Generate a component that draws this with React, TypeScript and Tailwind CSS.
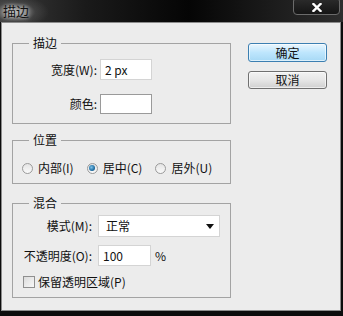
import React from 'react';

const font = { fontFamily: '"Noto Sans CJK SC", "Noto Sans", sans-serif' };

const Group: React.FC<{ title: string; className?: string; children: React.ReactNode }> = ({
  title,
  className,
  children,
}) => (
  <div className={`relative border border-[#a3a3a3] ${className ?? ''}`}>
    <span className="absolute left-[16px] top-[-10px] bg-[#ececec] px-[4px] text-[12px] leading-[18px] text-[#111]">
      {title}
    </span>
    {children}
  </div>
);

const Radio: React.FC<{ checked?: boolean; label: string }> = ({ checked, label }) => (
  <div className="flex items-center gap-[5px]">
    <span className="flex h-[11px] w-[11px] items-center justify-center rounded-full border border-[#9a9a9a] bg-gradient-to-b from-[#e4e4e4] to-[#fafafa]">
      {checked && (
        <span className="h-[6px] w-[6px] rounded-full bg-[radial-gradient(circle_at_40%_40%,#7fc3ea,#1f6ea3_60%,#0f3f60)]" />
      )}
    </span>
    <span className="text-[12px] leading-[16px] text-[#111]">{label}</span>
  </div>
);

export default function App() {
  return (
    <div style={font} className="flex h-[316px] w-[343px] flex-col overflow-hidden bg-[#0c0c0c]">
      {/* title bar */}
      <div className="relative flex h-[22px] items-center bg-[radial-gradient(ellipse_34px_16px_at_15px_12px,rgba(190,190,190,0.85),rgba(90,90,90,0.4)_60%,transparent),linear-gradient(90deg,#3a3a3a_0%,#1a1a1a_25%,#050505_55%,#1c1c1c_80%,#2e2e2e_100%)] pl-[3px]">
        <span className="text-[13px] leading-[16px] text-[#111] [text-shadow:0_0_4px_rgba(255,255,255,0.8)]">
          描边
        </span>
        <div className="absolute right-[3px] top-[-1px] flex h-[16px] w-[47px] items-center justify-center rounded-b-[4px] rounded-t-[2px] border border-[#6b6b6b] bg-gradient-to-b from-[#2a2a2a] to-[#151515]">
          <svg width="10" height="9" viewBox="0 0 10 9">
            <path d="M1.5 1l7 7M8.5 1l-7 7" stroke="#fff" strokeWidth="2.4" strokeLinecap="square" />
          </svg>
        </div>
      </div>

      {/* body */}
      <div className="ml-[1px] flex h-[289px] w-[340px] border border-[#8c8c8c] bg-[#ececec] pl-[10px] pt-[20px]">
        <div className="flex w-[219px] flex-col">
          <Group title="描边" className="h-[81px]">
            <div className="flex flex-col pt-[15px]">
              <div className="flex items-center">
                <span className="w-[84px] text-right text-[12px] leading-[16px] text-[#111]">宽度(W):</span>
                <div className="ml-[3px] flex h-[21px] w-[52px] items-center border border-[#d4d4d4] bg-white pl-[4px] text-[12px] text-[#111]">
                  2 px
                </div>
              </div>
              <div className="mt-[14px] flex items-center">
                <span className="w-[84px] text-right text-[12px] leading-[16px] text-[#111]">颜色:</span>
                <div className="ml-[3px] h-[20px] w-[52px] border border-[#9a9a9a] bg-white" />
              </div>
            </div>
          </Group>

          <Group title="位置" className="mt-[16px] h-[44px]">
            <div className="flex items-center gap-[13px] pl-[9px] pt-[19px]">
              <Radio label="内部(I)" />
              <Radio checked label="居中(C)" />
              <Radio label="居外(U)" />
            </div>
          </Group>

          <Group title="混合" className="mt-[19px] h-[95px]">
            <div className="flex flex-col pt-[11px]">
              <div className="flex items-center">
                <span className="w-[79px] text-right text-[12px] leading-[16px] text-[#111]">模式(M):</span>
                <div className="ml-[6px] flex h-[22px] w-[122px] items-center justify-between border border-[#d4d4d4] bg-white pl-[7px] pr-[5px] text-[12px] text-[#111]">
                  <span>正常</span>
                  <svg width="8" height="5" viewBox="0 0 8 5">
                    <path d="M0 0h8L4 5z" fill="#111" />
                  </svg>
                </div>
              </div>
              <div className="mt-[8px] flex items-center">
                <span className="w-[79px] text-right text-[12px] leading-[16px] text-[#111]">不透明度(O):</span>
                <div className="ml-[6px] flex h-[21px] w-[53px] items-center border border-[#d4d4d4] bg-white pl-[4px] text-[12px] text-[#111]">
                  100
                </div>
                <span className="ml-[4px] text-[12px] text-[#111]">%</span>
              </div>
              <div className="mt-[8px] flex items-center pl-[10px]">
                <span className="h-[12px] w-[12px] border border-[#8f8f8f] bg-gradient-to-br from-[#dcdcdc] to-[#f8f8f8]" />
                <span className="ml-[3px] text-[12px] leading-[16px] text-[#111]">保留透明区域(P)</span>
              </div>
            </div>
          </Group>
        </div>

        <div className="ml-[17px] flex w-[79px] flex-col">
          <button className="flex h-[19px] items-center justify-center rounded-[3px] border border-[#3c7fb1] bg-gradient-to-b from-[#eaf6fd] via-[#bee6fd] to-[#a7d9f5] text-[12px] leading-none text-[#111] shadow-[inset_0_0_0_1px_rgba(255,255,255,0.6)]">
            确定
          </button>
          <button className="mt-[9px] flex h-[18px] items-center justify-center rounded-[3px] border border-[#707070] bg-gradient-to-b from-[#f2f2f2] via-[#e6e6e6] to-[#d0d0d0] text-[12px] leading-none text-[#111] shadow-[inset_0_0_0_1px_rgba(255,255,255,0.6)]">
            取消
          </button>
        </div>
      </div>
    </div>
  );
}
